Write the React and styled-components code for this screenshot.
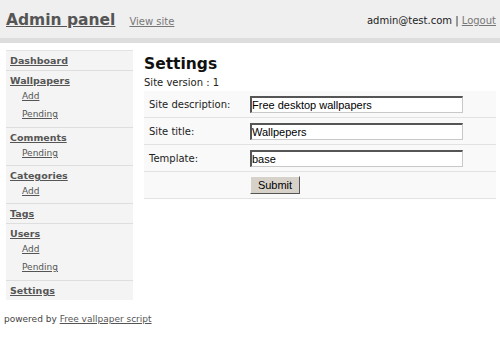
import React from 'react'
import styled, { createGlobalStyle } from 'styled-components'

const GlobalStyle = createGlobalStyle`
  body {
    margin: 0;
    background: #fff;
    font-family: "DejaVu Sans", Verdana, sans-serif;
    color: #333;
  }
`

const Header = styled.div`
  display: flex;
  align-items: center;
  height: 38px;
  padding: 0 4px 0 6px;
  background: #efefef;
  border-bottom: 5px solid #dddddd;
`

const Brand = styled.a`
  font-size: 15.5px;
  font-weight: bold;
  color: #555;
  text-decoration: underline;
  margin-top: 2px;
`

const ViewSite = styled.a`
  margin-left: 14px;
  font-size: 10px;
  color: #777;
  text-decoration: underline;
  margin-top: 4px;
`

const UserBox = styled.div`
  margin-left: auto;
  font-size: 10px;
  color: #222;
  margin-top: 3px;

  a {
    color: #777;
    text-decoration: underline;
  }
`

const Layout = styled.div`
  display: flex;
  align-items: flex-start;
  padding: 7px 4px 0 6px;
`

const Sidebar = styled.div`
  width: 127px;
  background: #f4f4f4;
  border-top: 1px solid #e4e4e4;
`

const Section = styled.div`
  padding: 4px 4px ${(p) => (p.$subs > 1 ? '4px' : '3px')};
  & + & {
    border-top: 1px solid #dedede;
  }
`

const NavHead = styled.a`
  display: block;
  font-size: 9.5px;
  font-weight: bold;
  color: #555;
  text-decoration: underline;
  line-height: 12px;
`

const NavSub = styled.a`
  display: block;
  margin-left: 12px;
  font-size: 9px;
  color: #555;
  text-decoration: underline;
  line-height: 18px;
`

const Main = styled.div`
  flex: 1;
  margin-left: 11px;
`

const Title = styled.h1`
  margin: 5px 0 4px;
  font-size: 15.5px;
  font-weight: bold;
  color: #111;
  line-height: 18px;
`

const Version = styled.div`
  font-size: 10px;
  color: #222;
  margin-bottom: 3px;
`

const Table = styled.div`
  display: grid;
  grid-template-columns: 106px 1fr;
`

const Row = styled.div`
  display: contents;
  & > * {
    background: #f9f9f9;
    border-bottom: 1px solid #e2e2e2;
    height: 26px;
    display: flex;
    align-items: center;
  }
`

const Label = styled.div`
  padding-left: 5px;
  font-size: 10px;
  color: #222;
`

const Field = styled.div``

const Input = styled.input`
  box-sizing: border-box;
  width: 213px;
  height: 17px;
  padding: 0;
  border: 1px solid #c8c8c8;
  border-top: 2px solid #555;
  border-left: 2px solid #555;
  background: #fff;
  font-family: "Liberation Sans", Arial, sans-serif;
  font-size: 11px;
  color: #000;
`

const Submit = styled.button`
  box-sizing: border-box;
  width: 50px;
  height: 18px;
  padding: 0;
  font-family: "Liberation Sans", Arial, sans-serif;
  font-size: 11px;
  color: #000;
  background: #d6d2ca;
  border: 1px solid;
  border-color: #fafafa #555 #555 #fafafa;
`

const Footer = styled.div`
  padding: 14px 4px;
  font-size: 9px;
  color: #444;

  a {
    color: #555;
    text-decoration: underline;
  }
`

const nav = [
  { head: 'Dashboard', subs: [] },
  { head: 'Wallpapers', subs: ['Add', 'Pending'] },
  { head: 'Comments', subs: ['Pending'] },
  { head: 'Categories', subs: ['Add'] },
  { head: 'Tags', subs: [] },
  { head: 'Users', subs: ['Add', 'Pending'] },
  { head: 'Settings', subs: [] },
]

const fields = [
  { label: 'Site description:', value: 'Free desktop wallpapers' },
  { label: 'Site title:', value: 'Wallpepers' },
  { label: 'Template:', value: 'base' },
]

export default function App() {
  return (
    <>
      <GlobalStyle />
      <Header>
        <Brand href="#">Admin panel</Brand>
        <ViewSite href="#">View site</ViewSite>
        <UserBox>
          admin@test.com | <a href="#">Logout</a>
        </UserBox>
      </Header>
      <Layout>
        <Sidebar>
          {nav.map((s) => (
            <Section key={s.head} $subs={s.subs.length}>
              <NavHead href="#">{s.head}</NavHead>
              {s.subs.map((sub) => (
                <NavSub key={sub} href="#">{sub}</NavSub>
              ))}
            </Section>
          ))}
        </Sidebar>
        <Main>
          <Title>Settings</Title>
          <Version>Site version : 1</Version>
          <Table>
            {fields.map((f) => (
              <Row key={f.label}>
                <Label>{f.label}</Label>
                <Field><Input defaultValue={f.value} /></Field>
              </Row>
            ))}
            <Row>
              <Label />
              <Field><Submit>Submit</Submit></Field>
            </Row>
          </Table>
        </Main>
      </Layout>
      <Footer>
        powered by <a href="#">Free vallpaper script</a>
      </Footer>
    </>
  )
}
